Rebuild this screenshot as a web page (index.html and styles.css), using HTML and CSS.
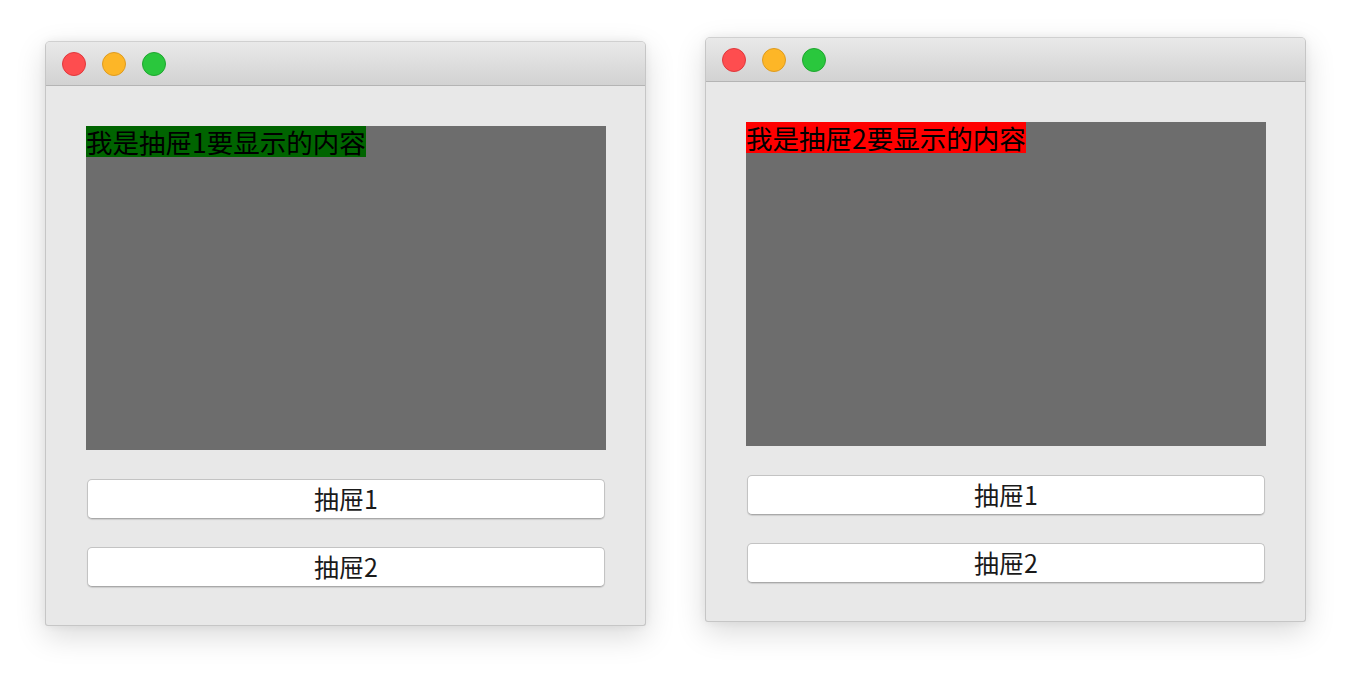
FILE: index.html
```html
<!DOCTYPE html>
<html lang="zh">
<head>
    <meta charset="UTF-8">
    <meta name="viewport" content="width=device-width, initial-scale=1.0">
    <title>抽屉</title>
    <link rel="stylesheet" href="styles.css">
</head>
<body>
    <div class="desktop">
        <div class="window window-first">
            <div class="title-bar">
                <span class="light light-close"></span>
                <span class="light light-min"></span>
                <span class="light light-max"></span>
            </div>
            <div class="window-body">
                <div class="drawer">
                    <span class="drawer-label label-green">我是抽屉1要显示的内容</span>
                </div>
                <button class="drawer-button">抽屉1</button>
                <button class="drawer-button">抽屉2</button>
            </div>
        </div>

        <div class="window">
            <div class="title-bar">
                <span class="light light-close"></span>
                <span class="light light-min"></span>
                <span class="light light-max"></span>
            </div>
            <div class="window-body">
                <div class="drawer">
                    <span class="drawer-label label-red">我是抽屉2要显示的内容</span>
                </div>
                <button class="drawer-button">抽屉1</button>
                <button class="drawer-button">抽屉2</button>
            </div>
        </div>
    </div>
</body>
</html>
```

FILE: styles.css
```css
html,
body {
    height: 100%;
}

body {
    margin: 0;
    padding: 0;
    background: #ffffff;
    font-family: "Noto Sans CJK SC", "Noto Sans", sans-serif;
}

.desktop {
    display: flex;
    align-items: flex-start;
    gap: 59px;
    padding: 37px 0 50px 45px;
}

.window {
    box-sizing: border-box;
    width: 601px;
    background: #e8e8e8;
    border: 1px solid #c6c6c6;
    border-top-color: #d0d0d0;
    border-radius: 5px 5px 3px 3px;
    box-shadow: 0 10px 30px rgba(0, 0, 0, 0.15), 0 0 8px rgba(0, 0, 0, 0.06);
}

.window-first {
    margin-top: 4px;
}

.title-bar {
    display: flex;
    align-items: center;
    gap: 16px;
    height: 43px;
    padding-left: 16px;
    background: linear-gradient(#e9e9e9, #d2d2d2);
    border-bottom: 1px solid #b4b4b4;
    border-radius: 4px 4px 0 0;
}

.light {
    box-sizing: border-box;
    width: 24px;
    height: 24px;
    border-radius: 50%;
}

.light-close {
    background: #fe4d4f;
    border: 1px solid #e0383c;
}

.light-min {
    background: #fdb627;
    border: 1px solid #de9b20;
}

.light-max {
    background: #2ac73d;
    border: 1px solid #1fa62f;
}

.window-body {
    display: flex;
    flex-direction: column;
    padding: 40px 39px 38px 40px;
}

.drawer {
    height: 324px;
    background: #6d6d6d;
    display: flex;
    align-items: flex-start;
}

.drawer-label {
    font-size: 26.5px;
    line-height: 31px;
    color: #000000;
}

.label-green {
    background: #006400;
}

.label-red {
    background: #ff0000;
}

.drawer-button {
    box-sizing: border-box;
    height: 40px;
    margin: 29px 1px 0 1px;
    padding: 0 0 3px 0;
    background: #ffffff;
    border: 1px solid #c3c3c3;
    border-bottom-color: #a9a9a9;
    border-radius: 5px;
    box-shadow: 0 1px 1px rgba(0, 0, 0, 0.12);
    font-family: "Noto Sans CJK SC", "Noto Sans", sans-serif;
    font-size: 25px;
    line-height: 34px;
    color: #1a1a1a;
}

.drawer-button + .drawer-button {
    margin-top: 28px;
}
```
